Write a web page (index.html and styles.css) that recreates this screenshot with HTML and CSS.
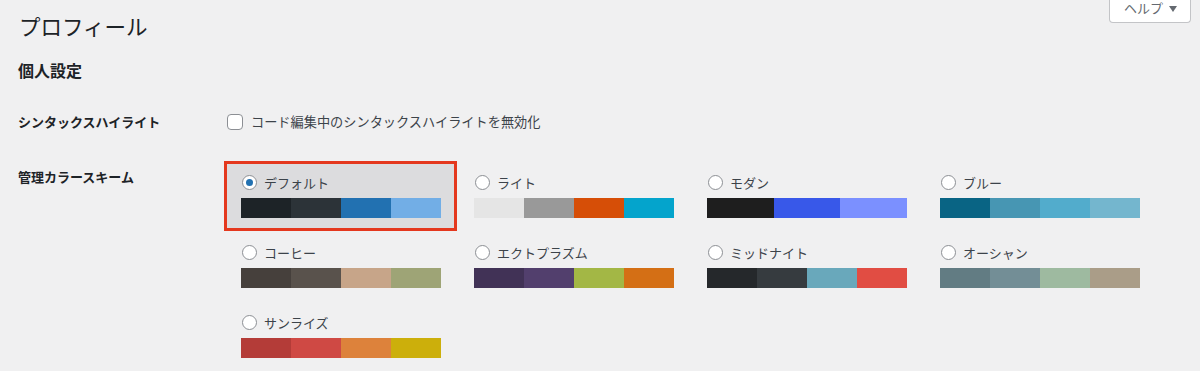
FILE: index.html
```html
<html>
    <head>
        <title>プロフィール</title>
        <link rel="stylesheet" href="styles.css">
    </head>
    <body>
        <div class="top">
            <h1>プロフィール</h1>
            <button class="help">ヘルプ <span class="arrow"></span></button>
        </div>
        <div class="wrap">
            <h2>個人設定</h2>

            <div class="row syntax">
                <div class="label">シンタックスハイライト</div>
                <div class="field">
                    <label class="check"><span class="box"></span>コード編集中のシンタックスハイライトを無効化</label>
                </div>
            </div>

            <div class="row scheme">
                <div class="label">管理カラースキーム</div>
                <div class="schemes">
                    <div class="option selected">
                        <label><span class="radio"></span>デフォルト</label>
                        <div class="palette"><span class="c1"></span><span class="c2"></span><span class="c3"></span><span class="c4"></span></div>
                    </div>
                    <div class="option light">
                        <label><span class="radio"></span>ライト</label>
                        <div class="palette"><span class="c1"></span><span class="c2"></span><span class="c3"></span><span class="c4"></span></div>
                    </div>
                    <div class="option modern">
                        <label><span class="radio"></span>モダン</label>
                        <div class="palette"><span class="c1"></span><span class="c2"></span><span class="c3"></span></div>
                    </div>
                    <div class="option blue">
                        <label><span class="radio"></span>ブルー</label>
                        <div class="palette"><span class="c1"></span><span class="c2"></span><span class="c3"></span><span class="c4"></span></div>
                    </div>
                    <div class="option coffee">
                        <label><span class="radio"></span>コーヒー</label>
                        <div class="palette"><span class="c1"></span><span class="c2"></span><span class="c3"></span><span class="c4"></span></div>
                    </div>
                    <div class="option ecto">
                        <label><span class="radio"></span>エクトプラズム</label>
                        <div class="palette"><span class="c1"></span><span class="c2"></span><span class="c3"></span><span class="c4"></span></div>
                    </div>
                    <div class="option midnight">
                        <label><span class="radio"></span>ミッドナイト</label>
                        <div class="palette"><span class="c1"></span><span class="c2"></span><span class="c3"></span><span class="c4"></span></div>
                    </div>
                    <div class="option ocean">
                        <label><span class="radio"></span>オーシャン</label>
                        <div class="palette"><span class="c1"></span><span class="c2"></span><span class="c3"></span><span class="c4"></span></div>
                    </div>
                    <div class="option sunrise">
                        <label><span class="radio"></span>サンライズ</label>
                        <div class="palette"><span class="c1"></span><span class="c2"></span><span class="c3"></span><span class="c4"></span></div>
                    </div>
                </div>
            </div>
        </div>
    </body>
</html>
```

FILE: styles.css
```css
*{
    margin:0;
    padding:0;
    box-sizing:border-box;
}
body{
    background:#f0f0f1;
    color:#1d2327;
    font-family:"Noto Sans CJK JP","Noto Sans",sans-serif;
    font-size:13px;
    overflow:hidden;
}
/* 顶部：标题 + 帮助按钮 */
.top{
    display:flex;
    justify-content:space-between;
    align-items:flex-start;
    padding-left:19px;
}
h1{
    font-size:21.5px;
    font-weight:400;
    line-height:30px;
    padding-top:11px;
}
.help{
    margin-right:9px;
    height:23px;
    padding:0 13px 6px 14px;
    background:#fff;
    border:1px solid #c3c4c7;
    border-top:0;
    border-radius:0 0 4px 4px;
    color:#646970;
    font-family:inherit;
    font-size:13px;
    line-height:16px;
}
.arrow{
    display:inline-block;
    margin-left:3px;
    vertical-align:middle;
    border-left:4px solid transparent;
    border-right:4px solid transparent;
    border-top:6px solid #646970;
}
.wrap{
    padding-left:18px;
}
h2{
    font-size:16px;
    font-weight:700;
    line-height:22px;
    margin-top:18px;
}
.row{
    display:flex;
}
.label{
    width:206px;
    font-weight:700;
    line-height:20px;
    color:#1d2327;
}
.syntax{
    margin-top:31px;
}
.check{
    display:flex;
    align-items:center;
    color:#3c434a;
    font-size:13.2px;
    line-height:20px;
    padding-left:3px;
}
.box{
    width:16px;
    height:16px;
    margin-right:8px;
    background:#fff;
    border:1px solid #8c8f94;
    border-radius:4px;
}
.scheme{
    margin-top:29px;
}
.scheme .label{
    padding-top:6px;
}
.schemes{
    display:grid;
    grid-template-columns:repeat(4,233px);
    grid-auto-rows:70px;
}
.option{
    padding:11px 16px 0 17px;
}
.option label{
    display:flex;
    align-items:center;
    height:20px;
    color:#3c434a;
}
.radio{
    width:15px;
    height:15px;
    margin:0 7px 0 1px;
    background:#fff;
    border:1px solid #8c8f94;
    border-radius:50%;
    display:flex;
    align-items:center;
    justify-content:center;
}
.option.selected{
    background:#dcdcde;
    outline:3px solid #e4381e;
    outline-offset:-3px;
}
.selected .radio:after{
    content:'';
    width:7px;
    height:7px;
    border-radius:50%;
    background:#2271b1;
}
.palette{
    display:flex;
    width:200px;
    height:20px;
    margin-top:6px;
}
.palette span{
    flex:1;
}
.selected .c1{background:#1d2327;}
.selected .c2{background:#2c3338;}
.selected .c3{background:#2271b1;}
.selected .c4{background:#72aee6;}
.light .c1{background:#e5e5e5;}
.light .c2{background:#999;}
.light .c3{background:#d64e07;}
.light .c4{background:#04a4cc;}
.modern .c1{background:#1e1e1e;}
.modern .c2{background:#3858e9;}
.modern .c3{background:#7b90ff;}
.blue .c1{background:#096484;}
.blue .c2{background:#4796b3;}
.blue .c3{background:#52accc;}
.blue .c4{background:#74b6ce;}
.coffee .c1{background:#46403c;}
.coffee .c2{background:#59524c;}
.coffee .c3{background:#c7a589;}
.coffee .c4{background:#9ea476;}
.ecto .c1{background:#413256;}
.ecto .c2{background:#523f6d;}
.ecto .c3{background:#a3b745;}
.ecto .c4{background:#d46f15;}
.midnight .c1{background:#25282b;}
.midnight .c2{background:#363b3f;}
.midnight .c3{background:#69a8bb;}
.midnight .c4{background:#e14d43;}
.ocean .c1{background:#627c83;}
.ocean .c2{background:#738e96;}
.ocean .c3{background:#9ebaa0;}
.ocean .c4{background:#aa9d88;}
.sunrise .c1{background:#b43c38;}
.sunrise .c2{background:#cf4944;}
.sunrise .c3{background:#dd823b;}
.sunrise .c4{background:#ccaf0b;}
```
